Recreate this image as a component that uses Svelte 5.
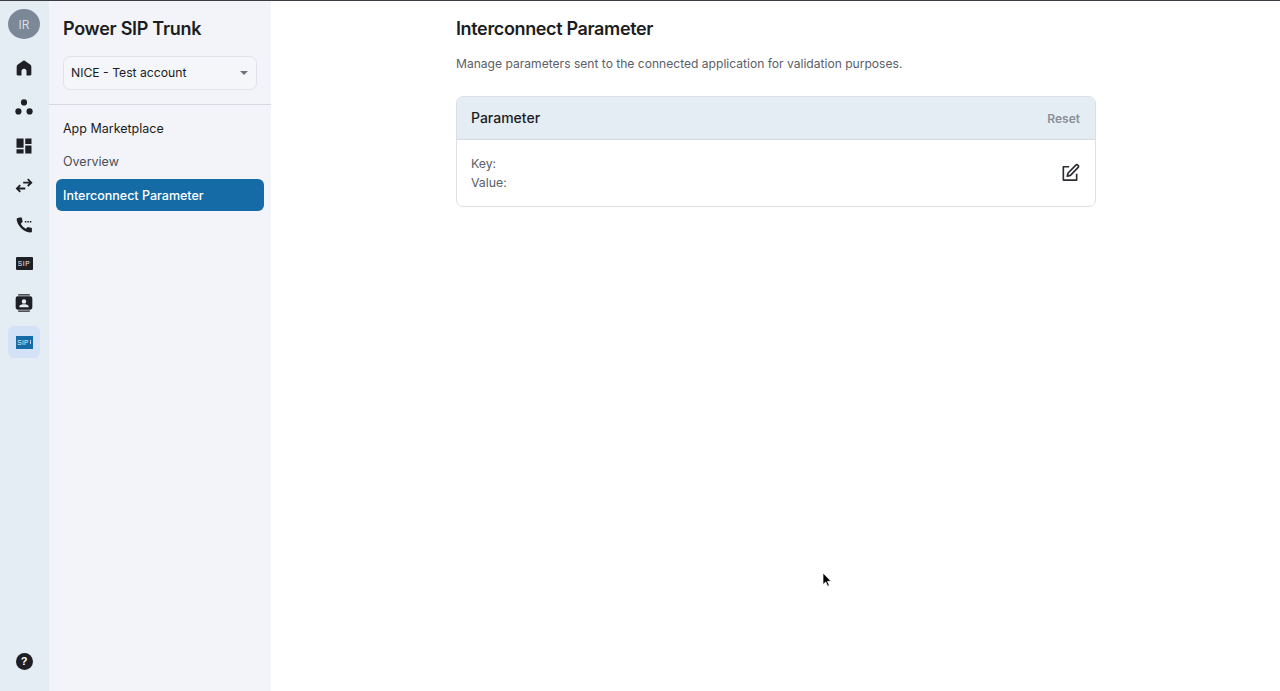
<script lang="ts">
	const navItems = [
		{ label: 'App Marketplace', tone: 'dark' },
		{ label: 'Overview', tone: 'muted' },
		{ label: 'Interconnect Parameter', tone: 'active' }
	];
</script>

<div class="shell">
	<nav class="rail">
		<div class="avatar">IR</div>

		<button class="rail-btn" aria-label="Home">
			<svg viewBox="0 0 24 24" width="20" height="20"><path d="M12 2.800 4.600 7.800c-.9.600-1.400 1.600-1.400 2.600v9.200c0 .8.600 1.400 1.400 1.400h4.400v-5a3 3 0 0 1 6 0v5h4.400c.8 0 1.400-.6 1.400-1.400v-9.200c0-1-.5-2-1.400-2.600z" /></svg>
		</button>
		<button class="rail-btn" aria-label="Apps">
			<svg viewBox="0 0 24 24" width="20" height="20"><circle cx="12" cy="6.500" r="3.700" /><circle cx="5.300" cy="17.300" r="3.700" /><circle cx="18.700" cy="17.300" r="3.700" /></svg>
		</button>
		<button class="rail-btn" aria-label="Dashboard">
			<svg viewBox="0 0 24 24" width="20" height="20"><path d="M3 3h8.500v11H3zM13.500 3H21v6.500h-7.500zM13.500 11.500H21V21h-7.500zM3 16h8.500v5H3z" /></svg>
		</button>
		<button class="rail-btn" aria-label="Routes">
			<svg viewBox="0 0 24 24" width="20" height="20" class="line"><path d="M3.500 15h10M7.500 11l-4 4 4 4M11 8h9.500M16.500 3.800l4.200 4.200-4.200 4" /></svg>
		</button>
		<button class="rail-btn" aria-label="Calls">
			<svg viewBox="0 0 24 24" width="20" height="20"><path d="M6.400 3 3.200 4.200C2.800 11.500 11 21 20.500 21l1-1v-4.500l-5-1.200-2.300 2.200c-2.400-1.100-4.800-3.600-6-6l2.200-2.300L9.300 3z" /><path d="M13 7.200h1.800v1.800H13zM16 7.200h1.800v1.800H16zM19 7.200h1.800v1.800H19z" /></svg>
		</button>
		<button class="rail-btn" aria-label="SIP">
			<span class="sip">SIP</span>
		</button>
		<button class="rail-btn" aria-label="Contacts">
			<svg viewBox="0 0 24 24" width="20" height="20"><path d="M5 1.500h14v1.500H5zM5 21h14v1.500H5z" /><path fill-rule="evenodd" d="M4.500 4h15A2.500 2.500 0 0 1 22 6.500v11a2.500 2.500 0 0 1-2.500 2.500h-15A2.500 2.500 0 0 1 2 17.500v-11A2.500 2.500 0 0 1 4.500 4zM12 7.500a2.700 2.700 0 1 0 0 5.400 2.700 2.700 0 0 0 0-5.400zM6.500 17h11v-1.200c0-1.500-3.600-2.200-5.500-2.200s-5.500.7-5.500 2.200z" /></svg>
		</button>
		<button class="rail-btn selected" aria-label="Power SIP Trunk">
			<span class="sip blue">SIP<i></i></span>
		</button>

		<button class="rail-btn help" aria-label="Help">
			<span class="help-dot">?</span>
		</button>
	</nav>

	<aside class="sidebar">
		<h1>Power SIP Trunk</h1>
		<div class="select">
			<span>NICE - Test account</span>
			<span class="caret"></span>
		</div>
		<ul class="menu">
			{#each navItems as item}
				<li class={item.tone}>{item.label}</li>
			{/each}
		</ul>
	</aside>

	<main class="content">
		<div class="column">
			<h2>Interconnect Parameter</h2>
			<p class="desc">Manage parameters sent to the connected application for validation purposes.</p>

			<section class="card">
				<header>
					<h3>Parameter</h3>
					<span class="reset">Reset</span>
				</header>
				<div class="card-body">
					<div class="fields">
						<div>Key:</div>
						<div>Value:</div>
					</div>
					<svg class="edit" viewBox="0 0 24 24" width="20" height="20" aria-label="Edit">
						<path d="M11 4.500H4v16h16v-7.500" />
						<path class="pen" d="M19 2.500a2 2 0 0 1 2.800 2.800L12.500 14.800l-3.800 1 1-3.800z" />
					</svg>
				</div>
			</section>
		</div>
	</main>

	<svg class="cursor" viewBox="0 0 10 16" width="10" height="16">
		<path d="M1 1v11.500l2.800-2.600 1.800 4.400 1.700-.8-1.800-4.200H9z" fill="#000" stroke="#fff" stroke-width=".7" />
	</svg>
</div>

<style>
	:global(body) {
		margin: 0;
		background: #fff;
		font-family: Inter, 'Liberation Sans', sans-serif;
		color: #1b1d22;
	}
	.shell {
		display: flex;
		height: 691px;
		border-top: 1px solid #3a3d42;
		box-sizing: border-box;
		overflow: hidden;
		position: relative;
	}
	.rail {
		width: 49px;
		flex: none;
		background: #e4ecf4;
		display: flex;
		flex-direction: column;
		align-items: center;
		gap: 7.150px;
		padding: 8px 1px 14px 0;
		box-sizing: border-box;
	}
	.avatar {
		width: 32px;
		height: 30px;
		border-radius: 50%;
		background: #7b8898;
		color: #e8edf2;
		font-size: 12px;
		font-weight: 300;
		display: flex;
		align-items: center;
		justify-content: center;
		margin-bottom: 6px;
	}
	.rail-btn {
		width: 32px;
		height: 32px;
		border: none;
		padding: 0;
		background: none;
		border-radius: 6px;
		display: flex;
		align-items: center;
		justify-content: center;
		color: #1b1d22;
		flex: none;
	}
	.rail-btn svg {
		fill: #1e2025;
	}
	.rail-btn svg.line {
		fill: none;
		stroke: #1e2025;
		stroke-width: 2.200;
	}
	.rail-btn.selected {
		background: #d3e2f6;
	}
	.rail-btn.help {
		margin-top: auto;
	}
	.sip {
		width: 17px;
		height: 13px;
		background: #1e2025;
		color: #eef0f3;
		font-size: 6.500px;
		font-weight: 500;
		letter-spacing: 0.6px;
		line-height: 13px;
		text-align: center;
		border-radius: 1px;
	}
	.sip.blue {
		background: #146ba6;
		border-radius: 0;
		display: flex;
		align-items: center;
		justify-content: center;
		gap: 1px;
		letter-spacing: 0.4px;
		font-size: 6.500px;
	}
	.sip.blue i {
		width: 1px;
		height: 4px;
		background: #b9d2ea;
	}
	.help-dot {
		width: 17px;
		height: 17px;
		border-radius: 50%;
		background: #1e2025;
		color: #fff;
		font-size: 11px;
		font-weight: 600;
		line-height: 17px;
		text-align: center;
	}
	.sidebar {
		width: 222px;
		flex: none;
		background: #f2f4f9;
	}
	h1 {
		margin: 16px 0 0 14px;
		font-size: 18px;
		line-height: 24px;
		font-weight: 600;
		letter-spacing: -0.28px;
		color: #1b1d22;
	}
	.select {
		margin: 15px 14px 0 14px;
		height: 34px;
		box-sizing: border-box;
		padding: 0 8px 1px 7px;
		border: 1px solid #dfe3ea;
		border-radius: 7px;
		background: #f4f6fa;
		display: flex;
		align-items: center;
		justify-content: space-between;
		font-size: 12.200px;
		color: #1b1d22;
	}
	.caret {
		width: 0;
		height: 0;
		border-left: 4.500px solid transparent;
		border-right: 4.500px solid transparent;
		border-top: 4.500px solid #6b7280;
	}
	.menu {
		list-style: none;
		margin: 14px 0 0;
		padding: 6px 7px 0;
		border-top: 1px solid #d5d9e0;
		font-size: 12.500px;
	}
	.menu li {
		height: 32px;
		margin-bottom: 2px;
		padding: 0 7px;
		display: flex;
		align-items: center;
		border-radius: 6px;
		box-sizing: border-box;
	}
	.menu .dark {
		color: #1b1d22;
		padding-top: 2px;
	}
	.menu .muted {
		color: #4b5058;
	}
	.menu .active {
		background: #146ba6;
		color: #fff;
		font-weight: 500;
	}
	.content {
		flex: 1;
		display: flex;
		justify-content: center;
		background: #fff;
	}
	.column {
		width: 640px;
		margin-left: 1px;
		padding-top: 16px;
	}
	h2 {
		margin: 0;
		font-size: 18px;
		line-height: 24px;
		font-weight: 600;
		letter-spacing: -0.36px;
		color: #1b1d22;
	}
	.desc {
		margin: 13px 0 0;
		font-size: 12.080px;
		line-height: 20px;
		color: #5b6068;
	}
	.card {
		margin-top: 22px;
		border: 1px solid #dcdfe5;
		border-radius: 7px;
		overflow: hidden;
		box-sizing: border-box;
	}
	.card header {
		height: 42px;
		padding: 0 14px;
		background: #e4ecf4;
		border-bottom: 1px solid #d5d9e0;
		display: flex;
		align-items: center;
		justify-content: space-between;
	}
	h3 {
		margin: 0 0 1px;
		font-size: 14px;
		font-weight: 500;
		color: #1b1d22;
	}
	.reset {
		font-size: 12px;
		font-weight: 600;
		color: #8b9098;
		margin-right: 1px;
	}
	.card-body {
		height: 66px;
		padding: 0 15px 0 14px;
		display: flex;
		align-items: center;
		justify-content: space-between;
	}
	.fields {
		font-size: 12.300px;
		line-height: 19px;
		color: #5b6068;
	}
	.edit {
		fill: none;
		stroke: #2a2d32;
		stroke-width: 2;
		stroke-linejoin: round;
	}
	.edit .pen {
		stroke-width: 2;
	}
	.cursor {
		position: absolute;
		left: 822px;
		top: 571px;
	}
</style>
